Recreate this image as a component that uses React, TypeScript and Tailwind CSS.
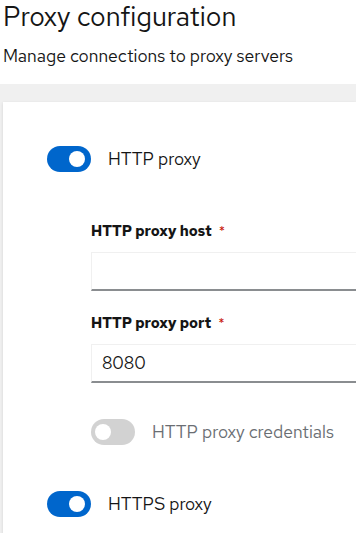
import React from "react";

function Switch({ on, disabled }: { on: boolean; disabled?: boolean }) {
  return (
    <div
      className={
        "relative w-[44px] h-[26px] rounded-full shrink-0 " +
        (disabled ? "bg-[#d2d2d2]" : on ? "bg-[#0066cc]" : "bg-[#8a8d90]")
      }
    >
      <div
        className={
          "absolute top-[5px] w-[16px] h-[16px] rounded-full bg-white " +
          (on ? "right-[6px]" : "left-[4px]")
        }
      />
    </div>
  );
}

function Field({ label, value }: { label: string; value?: string }) {
  return (
    <div className="flex flex-col">
      <div className="h-[22px] flex items-center text-[14.6px] font-bold text-[#151515]">
        {label}
        <span className="ml-[7px] text-[#c9190b] font-normal text-[14px]">*</span>
      </div>
      <div className="mt-[10px] h-[39px] border-t border-l border-[#f0f0f0] border-b-[2px] border-b-[#8a8d90] flex items-center pl-[10px] text-[17.5px] text-[#151515]">
        {value}
      </div>
    </div>
  );
}

export default function App() {
  return (
    <div className="w-[356px] h-[533px] overflow-hidden bg-white font-['Red_Hat_Text','Open_Sans',sans-serif] text-[#151515]">
      <div className="pl-[3px]">
        <h1 className="h-[34px] text-[27px] leading-[34px] text-[#151515]">Proxy configuration</h1>
        <p className="mt-[10px] text-[17.5px] leading-[24px] text-[#151515]">Manage connections to proxy servers</p>
      </div>
      <div className="mt-[16px] bg-[#f0f0f0] pt-[18px] pl-[3px] h-[500px]">
        <div className="bg-white h-full shadow-[0_1px_3px_rgba(0,0,0,0.12)] pt-[44px] pl-[44px]">
          <div className="flex items-center gap-[17px]">
            <Switch on />
            <span className="text-[17.5px]">HTTP proxy</span>
          </div>
          <div className="pl-[44px] mt-[48px]">
            <Field label="HTTP proxy host" />
            <div className="mt-[21px]">
              <Field label="HTTP proxy port" value="8080" />
            </div>
            <div className="mt-[36px] flex items-center gap-[17px]">
              <Switch on={false} disabled />
              <span className="text-[17.5px] text-[#6a6e73]">HTTP proxy credentials</span>
            </div>
          </div>
          <div className="mt-[45px] flex items-center gap-[17px]">
            <Switch on />
            <span className="text-[17.5px]">HTTPS proxy</span>
          </div>
        </div>
      </div>
    </div>
  );
}
